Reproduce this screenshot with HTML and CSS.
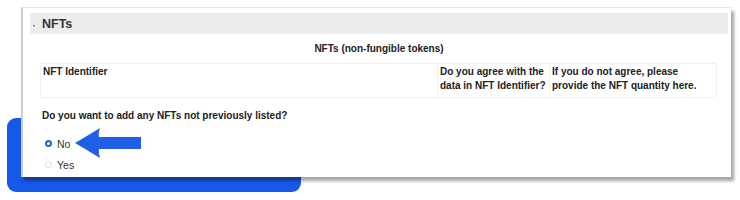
FILE: index.html
```html
<!DOCTYPE html>
<html>
<head>
<meta charset="utf-8">
<link rel="stylesheet" href="styles.css">
</head>
<body>
<div class="stage">
  <div class="highlight"></div>
  <div class="card">
    <div class="section-head">
      <span class="caret"></span>
      <span class="section-title">NFTs</span>
    </div>
    <div class="caption">NFTs (non-fungible tokens)</div>
    <div class="grid">
      <div class="cell c1">NFT Identifier</div>
      <div class="cell c2">Do you agree with the data in NFT Identifier?</div>
      <div class="cell c3">If you do not agree, please provide the NFT quantity here.</div>
    </div>
    <div class="question">Do you want to add any NFTs not previously listed?</div>
    <div class="options">
      <label class="option"><span class="radio checked"></span><span>No</span></label>
      <label class="option"><span class="radio"></span><span>Yes</span></label>
    </div>
  </div>
  <svg class="arrow" width="70" height="32" viewBox="0 0 70 32">
    <path d="M0 15 Q12 8 25 0 Q23 6 24 9 L66 9 L66 21 L24 21 Q23 25 25 30 Q12 22 0 15 Z" fill="#1f5fe8"/>
  </svg>
</div>
</body>
</html>
```

FILE: styles.css
```css
html, body {
  margin: 0;
  padding: 0;
  background: #ffffff;
}
body {
  font-family: "Liberation Sans", Arial, Helvetica, sans-serif;
  color: #222;
}
.stage {
  position: relative;
  width: 740px;
  height: 200px;
  padding-top: 7px;
  box-sizing: border-box;
  overflow: hidden;
}
.highlight {
  position: absolute;
  left: 7px;
  top: 118px;
  width: 294px;
  height: 74px;
  background: #1659e8;
  border-radius: 9px;
}
.card {
  position: relative;
  margin-left: 21px;
  width: 710px;
  height: 170px;
  box-sizing: border-box;
  background: #ffffff;
  border-left: 2px solid #cfcfcf;
  border-top: 1px solid #e6e6e6;
  box-shadow: 3px 4px 3px rgba(0, 0, 0, 0.35);
  padding: 5px 3px 0 7px;
}
.section-head {
  height: 21px;
  background: #ececec;
  display: flex;
  align-items: center;
  padding-left: 3px;
}
.caret {
  width: 0;
  height: 0;
  border-left: 1.5px solid transparent;
  border-right: 1.5px solid transparent;
  border-top: 2px solid #555;
  margin-top: 5px;
  margin-right: 7px;
}
.section-title {
  font-size: 12.5px;
  font-weight: bold;
  color: #333;
}
.caption {
  margin-top: 8px;
  text-align: center;
  font-size: 10px;
  font-weight: bold;
  line-height: 13px;
}
.grid {
  margin: 8px 11px 0 10px;
  display: grid;
  grid-template-columns: 396px 112px 1fr;
  height: 35px;
  border: 1px solid #f1f1f1;
  box-sizing: border-box;
}
.cell {
  font-size: 10px;
  font-weight: bold;
  line-height: 14px;
  padding: 1px 2px;
}
.c2, .c3 {
  border-left: 1px solid #f1f1f1;
}
.c3 {
  padding-right: 8px;
}
.question {
  margin-top: 11px;
  margin-left: 12px;
  font-size: 10px;
  font-weight: bold;
  line-height: 13px;
}
.options {
  margin-top: 14px;
  margin-left: 15px;
  display: flex;
  flex-direction: column;
  gap: 6px;
}
.option {
  display: flex;
  align-items: center;
  height: 15px;
  font-size: 10.5px;
  color: #333;
}
.radio {
  width: 7px;
  height: 7px;
  box-sizing: border-box;
  border-radius: 50%;
  border: 1px solid #dcdcdc;
  margin-right: 5px;
}
.radio.checked {
  border: 2px solid #1f62e0;
  background: #fff;
}
.arrow {
  position: absolute;
  left: 75px;
  top: 128px;
}
```
